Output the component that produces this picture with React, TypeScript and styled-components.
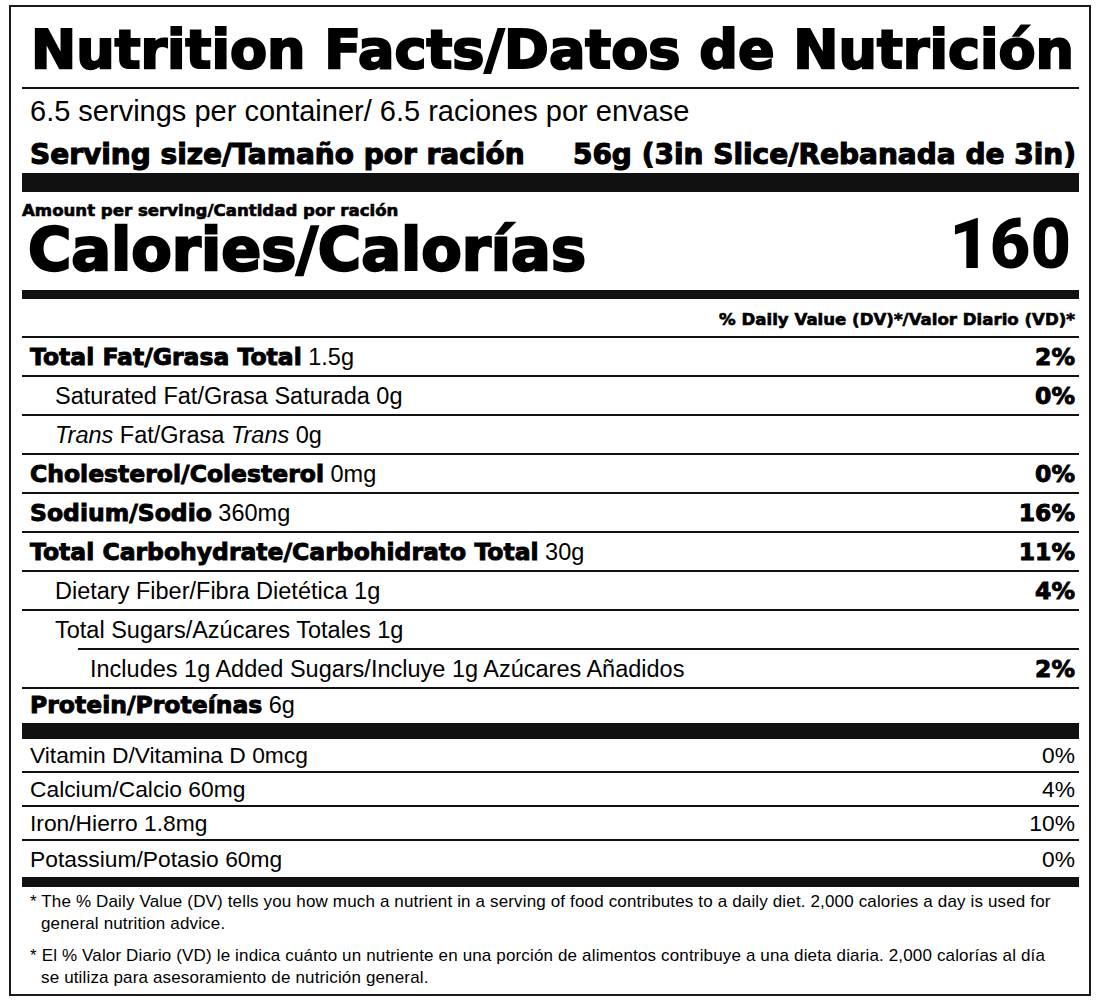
import React from "react";
import styled, { createGlobalStyle, css } from "styled-components";

const HEAVY = `"DejaVu Sans", "Liberation Sans", Arial, sans-serif`;
const REG = `"Liberation Sans", Arial, Helvetica, sans-serif`;

const heavy = css`
  font-family: ${HEAVY};
  font-weight: 700;
  -webkit-text-stroke: 0.04em currentColor;
`;

const Global = createGlobalStyle`
  html, body { margin: 0; padding: 0; background: #ffffff; }
  body { font-family: ${REG}; color: #000; }
`;

const Page = styled.main`
  box-sizing: border-box;
  width: 1098px;
  height: 1000px;
  padding: 5px 0 0 9px;
  background: #fff;
`;

const Label = styled.section`
  box-sizing: border-box;
  width: 1082px;
  height: 991px;
  border: 2px solid #1a1a1a;
  padding: 0 10px 0 11px;
  display: flex;
  flex-direction: column;
`;

const Rule = styled.div<{ $h: number; $inset?: number }>`
  flex: none;
  height: ${(p) => p.$h}px;
  margin-left: ${(p) => p.$inset ?? 0}px;
  background: #111;
`;

const Title = styled.h1`
  flex: none;
  box-sizing: border-box;
  margin: 0;
  height: 80px;
  padding: 16px 0 0 9px;
  ${heavy};
  font-size: 54px;
  line-height: 54px;
  white-space: nowrap;
`;

const ServingBlock = styled.div`
  flex: none;
  box-sizing: border-box;
  height: 84px;
  padding: 8px 3px 0 8px;
`;

const ServingsLine = styled.div`
  font-size: 29px;
  line-height: 29px;
  white-space: nowrap;
`;

const ServingSize = styled.div`
  display: flex;
  justify-content: space-between;
  margin-top: 15px;
  ${heavy};
  font-size: 28px;
  line-height: 28px;
  white-space: nowrap;
`;

const CalorieBlock = styled.div`
  flex: none;
  box-sizing: border-box;
  height: 98px;
  padding: 10px 8px 0 0;
`;

const AmountLine = styled.div`
  ${heavy};
  font-size: 16.6px;
  line-height: 17px;
  white-space: nowrap;
`;

const CalorieLine = styled.div`
  display: flex;
  justify-content: space-between;
  align-items: flex-end;
  height: 62px;
  padding-left: 6px;
  white-space: nowrap;
`;

const CalorieWord = styled.span`
  ${heavy};
  font-size: 59px;
  line-height: 56px;
  margin-bottom: 3px;
`;

const CalorieNumber = styled.span`
  font-family: "Roboto", ${HEAVY};
  font-weight: 900;
  font-size: 70px;
  line-height: 50px;
  margin-bottom: 12px;
`;

const DVHeader = styled.div`
  flex: none;
  box-sizing: border-box;
  height: 37px;
  padding: 12px 4px 0 0;
  text-align: right;
  ${heavy};
  font-size: 16.6px;
  line-height: 17px;
  white-space: nowrap;
`;

const Row = styled.div<{ $indent: number; $h: number; $size: number; $top?: number }>`
  flex: none;
  box-sizing: border-box;
  display: flex;
  justify-content: space-between;
  align-items: center;
  height: ${(p) => p.$h}px;
  padding: ${(p) => p.$top ?? 0}px 4px 0 ${(p) => p.$indent}px;
  font-size: ${(p) => p.$size}px;
  line-height: 1;
  white-space: nowrap;
`;

const B = styled.span`
  ${heavy};
`;

const I = styled.span`
  font-style: italic;
`;

const Pct = styled.span<{ $bold?: boolean }>`
  ${(p) =>
    p.$bold
      ? heavy
      : css`
          font-family: ${REG};
          font-weight: 400;
        `};
`;

const Footnotes = styled.div`
  flex: 1;
  box-sizing: border-box;
  padding: 4px 8px 0 8px;
  font-size: 17px;
  letter-spacing: 0.15px;
  line-height: 22px;
`;

const Note = styled.p<{ $gap?: number }>`
  margin: ${(p) => p.$gap ?? 0}px 0 0 0;
  padding-left: 11px;
  text-indent: -11px;
  white-space: nowrap;
`;

type Nutrient = {
  name: React.ReactNode;
  amount: string;
  pct?: string;
  bold?: boolean;
  indent: number;
  ruleInset?: number;
};

const nutrients: Nutrient[] = [
  { name: "Total Fat/Grasa Total", amount: "1.5g", pct: "2%", bold: true, indent: 8 },
  { name: "Saturated Fat/Grasa Saturada", amount: "0g", pct: "0%", indent: 33 },
  {
    name: (
      <>
        <I>Trans</I> Fat/Grasa <I>Trans</I>
      </>
    ),
    amount: "0g",
    indent: 33,
  },
  { name: "Cholesterol/Colesterol", amount: "0mg", pct: "0%", bold: true, indent: 8 },
  { name: "Sodium/Sodio", amount: "360mg", pct: "16%", bold: true, indent: 8 },
  {
    name: "Total Carbohydrate/Carbohidrato Total",
    amount: "30g",
    pct: "11%",
    bold: true,
    indent: 8,
  },
  { name: "Dietary Fiber/Fibra Dietética", amount: "1g", pct: "4%", indent: 33 },
  { name: "Total Sugars/Azúcares Totales", amount: "1g", indent: 33, ruleInset: 56 },
  {
    name: "Includes 1g Added Sugars/Incluye 1g Azúcares Añadidos",
    amount: "",
    pct: "2%",
    indent: 68,
  },
];

const vitamins = [
  { name: "Vitamin D/Vitamina D 0mcg", pct: "0%" },
  { name: "Calcium/Calcio 60mg", pct: "4%" },
  { name: "Iron/Hierro 1.8mg", pct: "10%" },
  { name: "Potassium/Potasio 60mg", pct: "0%" },
];

export default function App() {
  return (
    <Page>
      <Global />
      <Label>
        <Title>Nutrition Facts/Datos de Nutrición</Title>
        <Rule $h={2} />
        <ServingBlock>
          <ServingsLine>6.5 servings per container/ 6.5 raciones por envase</ServingsLine>
          <ServingSize>
            <span>Serving size/Tamaño por ración</span>
            <span>56g (3in Slice/Rebanada de 3in)</span>
          </ServingSize>
        </ServingBlock>
        <Rule $h={19} />
        <CalorieBlock>
          <AmountLine>Amount per serving/Cantidad por ración</AmountLine>
          <CalorieLine>
            <CalorieWord>Calories/Calorías</CalorieWord>
            <CalorieNumber>160</CalorieNumber>
          </CalorieLine>
        </CalorieBlock>
        <Rule $h={9} />
        <DVHeader>% Daily Value (DV)*/Valor Diario (VD)*</DVHeader>
        <Rule $h={2} />
        {nutrients.map((n, i) => (
          <React.Fragment key={i}>
            <Row $indent={n.indent} $h={37} $size={23.5} $top={2}>
              <span>
                {n.bold ? <B>{n.name}</B> : n.name}
                {n.amount ? ` ${n.amount}` : ""}
              </span>
              {n.pct ? <Pct $bold>{n.pct}</Pct> : null}
            </Row>
            <Rule $h={2} $inset={n.ruleInset} />
          </React.Fragment>
        ))}
        <Row $indent={8} $h={34} $size={23.5}>
          <span>
            <B>Protein/Proteínas</B> 6g
          </span>
        </Row>
        <Rule $h={16} />
        {vitamins.map((v, i) => (
          <React.Fragment key={v.name}>
            <Row $indent={8} $h={i === vitamins.length - 1 ? 36 : 32} $size={22.8}>
              <span>{v.name}</span>
              <Pct>{v.pct}</Pct>
            </Row>
            {i < vitamins.length - 1 ? <Rule $h={2} /> : null}
          </React.Fragment>
        ))}
        <Rule $h={10} />
        <Footnotes>
          <Note>
            * The % Daily Value (DV) tells you how much a nutrient in a serving of food contributes to a daily diet. 2,000 calories a day is used for
            <br />
            general nutrition advice.
          </Note>
          <Note $gap={10}>
            * El % Valor Diario (VD) le indica cuánto un nutriente en una porción de alimentos contribuye a una dieta diaria. 2,000 calorías al día
            <br />
            se utiliza para asesoramiento de nutrición general.
          </Note>
        </Footnotes>
      </Label>
    </Page>
  );
}
